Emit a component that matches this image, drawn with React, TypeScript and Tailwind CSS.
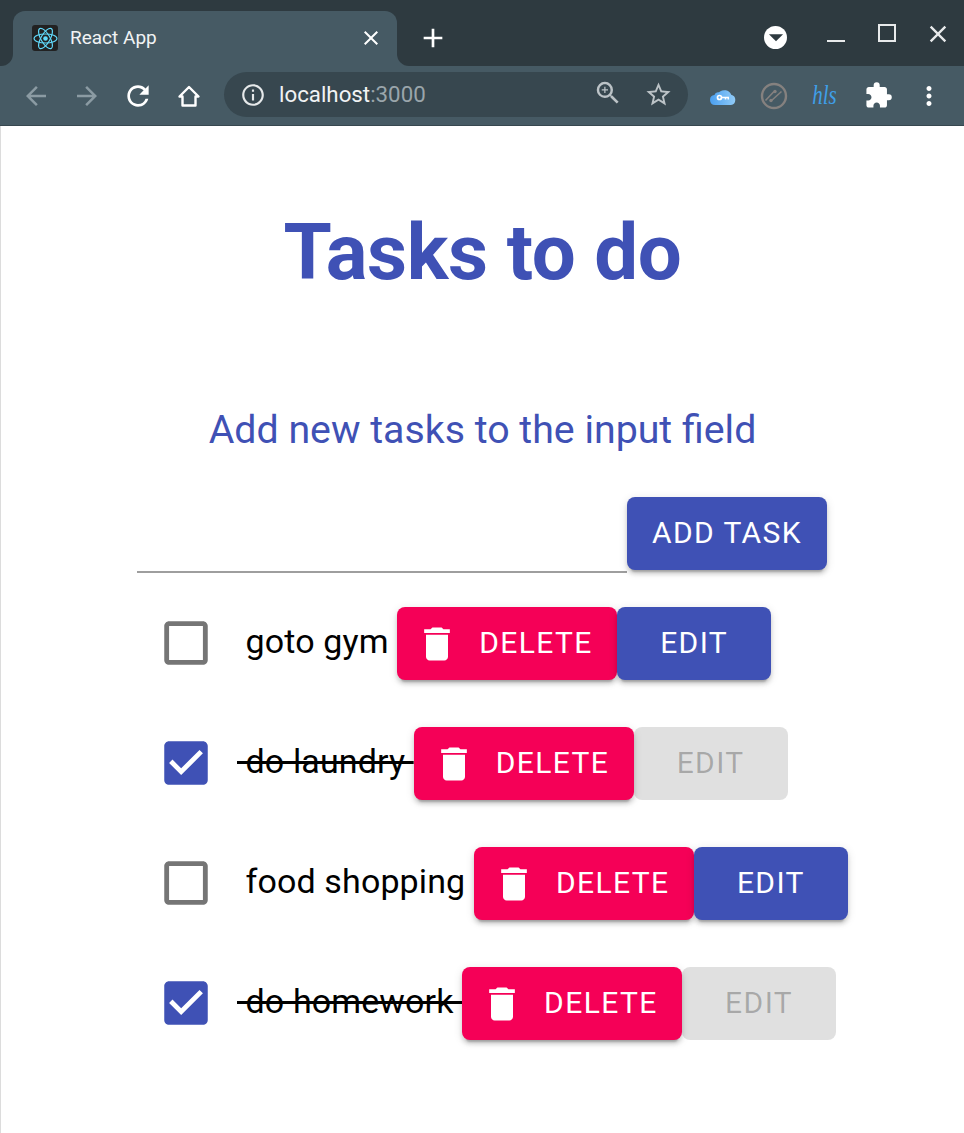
import React from "react";
import { MdArrowBack, MdArrowForward, MdRefresh, MdInfoOutline, MdZoomIn, MdStarBorder, MdExtension, MdMoreVert, MdClose, MdAdd, MdArrowDropDown } from "react-icons/md";

const raised = "shadow-[0_6px_2px_-4px_rgba(0,0,0,0.2),0_4px_4px_rgba(0,0,0,0.14),0_2px_10px_rgba(0,0,0,0.12)]";

const ReactLogo = () => (
  <div className="w-[26px] h-[26px] bg-[#222222] rounded-[3px] flex items-center justify-center shrink-0">
    <svg width="25" height="25" viewBox="-12 -12 24 24" fill="none" stroke="#61dafb" strokeWidth="1.1">
      <circle r="2.2" fill="#61dafb" stroke="none" />
      <ellipse rx="11" ry="4.3" />
      <ellipse rx="11" ry="4.3" transform="rotate(60)" />
      <ellipse rx="11" ry="4.3" transform="rotate(120)" />
    </svg>
  </div>
);

const Cloud = () => (
  <svg width="26" height="20" viewBox="0 0 26 20" className="mb-[2px]">
    <defs>
      <linearGradient id="cl" gradientUnits="userSpaceOnUse" x1="0" y1="0" x2="26" y2="0">
        <stop offset="0" stopColor="#4a9ff0" />
        <stop offset="1" stopColor="#93cdf8" />
      </linearGradient>
    </defs>
    <g fill="url(#cl)">
      <path d="M5 20a5 5 0 0 1-.6-9.960A4 4 0 0 1 9 7.300 7.500 7.500 0 0 1 21.200 9.800 5.200 5.200 0 0 1 21 20z" />
    </g>
    <circle cx="9.500" cy="12.500" r="2" fill="none" stroke="#fff" strokeWidth="1.700" />
    <path d="M11.500 12.500h7.500M15.500 12.500v2M18.300 12.500v2" stroke="#fff" strokeWidth="1.500" fill="none" />
  </svg>
);

const NoLink = () => (
  <svg width="28" height="28" viewBox="0 0 28 28" fill="none" stroke="#85817f" strokeWidth="2.400">
    <circle cx="14" cy="14" r="12" />
    <path d="M5.500 18.500 L14 9.500 M11 19 L21.500 9.500" strokeWidth="1.600" />
    <circle cx="11" cy="18.500" r="1.700" fill="#85817f" stroke="none" />
    <circle cx="15" cy="9.500" r="1.700" fill="#85817f" stroke="none" />
  </svg>
);

const HomeIcon = () => (
  <svg width="24" height="24" viewBox="0 0 24 24" fill="none" stroke="#ffffff" strokeWidth="2.400" strokeLinejoin="round">
    <path d="M12 3 L21.500 12.500 H18.500 V21.500 H5.500 V12.500 H2.500 Z" />
  </svg>
);

const TrashIcon = () => (
  <svg width="44" height="44" viewBox="0 0 24 24" fill="#ffffff" className="shrink-0">
    <path d="M6 19c0 1.100.9 2 2 2h8c1.100 0 2-.9 2-2V7H6v12zM19 4h-3.500l-1-1h-5l-1 1H5v2h14V4z" />
  </svg>
);

const Box = ({ checked }: { checked: boolean }) => (
  <svg width="58" height="58" viewBox="0 0 24 24" fill={checked ? "#3f51b5" : "#757575"} className="shrink-0 -mx-[7px] mb-[2px]">
    {checked ? (
      <path d="M19 3H5c-1.110 0-2 .9-2 2v14c0 1.100.89 2 2 2h14c1.110 0 2-.9 2-2V5c0-1.100-.89-2-2-2zm-9 14l-5-5 1.410-1.410L10 14.170l7.590-7.590L19 8l-9 9z" />
    ) : (
      <path d="M19 5v14H5V5h14m0-2H5c-1.100 0-2 .9-2 2v14c0 1.100.9 2 2 2h14c1.100 0 2-.9 2-2V5c0-1.100-.9-2-2-2z" />
    )}
  </svg>
);

const Row = ({ label, done }: { label: string; done: boolean }) => (
  <div className="flex items-center h-[73px] mb-[47px] pl-[27px]">
    <Box checked={done} />
    <span className={`ml-[29px] mb-[5px] text-[34px] leading-[48px] tracking-[0.120px] text-black whitespace-pre ${done ? "line-through" : ""}`}>
      {` ${label} `}
    </span>
    <button className={`h-[73px] w-[220px] pl-[18px] flex items-center rounded-[8px] bg-[#f50057] text-white text-[30px] tracking-[1.400px] ${raised}`}>
      <TrashIcon />
      <span className="ml-[20px] mb-[2px]">DELETE</span>
    </button>
    {done ? (
      <button disabled className="h-[73px] w-[154px] pb-[2px] rounded-[8px] bg-black/12 text-black/26 text-[30px] tracking-[1.400px]">EDIT</button>
    ) : (
      <button className={`h-[73px] w-[154px] pb-[2px] rounded-[8px] bg-[#3f51b5] text-white text-[30px] tracking-[1.400px] ${raised}`}>EDIT</button>
    )}
  </div>
);

const Slot = ({ children, className = "" }: { children: React.ReactNode; className?: string }) => (
  <div className={`w-[51px] h-[51px] flex items-center justify-center shrink-0 ${className}`}>{children}</div>
);

export default function App() {
  return (
    <div className="w-[964px] h-[1133px] overflow-hidden flex flex-col bg-white font-['Roboto',sans-serif]">
      {/* tab strip */}
      <div className="h-[66px] flex bg-[#465a64] shrink-0">
        <div className="w-[13px] bg-[#2e3a40] rounded-br-[12px]" />
        <div className="w-[384px] bg-[#2e3a40] flex flex-col">
          <div className="h-[11px]" />
          <div className="flex-1 bg-[#465a64] rounded-t-[12px] flex items-center pl-[19px] pr-[14px] pb-[1px]">
            <ReactLogo />
            <span className="ml-[12px] text-[19px] text-[#f1f3f4] flex-1">React App</span>
            <MdClose size={24} color="#ffffff" />
          </div>
        </div>
        <div className="flex-1 bg-[#2e3a40] rounded-bl-[12px] flex items-start pl-[10px] pr-[1px] pt-[8px]">
          <Slot>
            <MdAdd size={32} color="#ffffff" className="mt-[9px]" />
          </Slot>
          <div className="flex-1" />
          <Slot className="mr-[9px]">
            <div className="w-[23px] h-[23px] rounded-full bg-white flex items-center justify-center mt-[7px]">
              <MdArrowDropDown size={34} color="#2e3a40" className="shrink-0" />
            </div>
          </Slot>
          <Slot>
            <div className="w-[18px] h-[2px] bg-[#e8eaeb] mt-[14px]" />
          </Slot>
          <Slot>
            <div className="w-[18px] h-[18px] border-2 border-[#e8eaeb] -mt-[1px]" />
          </Slot>
          <Slot>
            <MdClose size={28} color="#e8eaeb" className="mt-[1px]" />
          </Slot>
        </div>
      </div>

      {/* toolbar */}
      <div className="h-[60px] bg-[#465a64] border-b border-[#37474f] flex items-center pl-[10px] pr-[9px] shrink-0">
        <Slot><MdArrowBack size={30} color="#8b9ba3" /></Slot>
        <Slot><MdArrowForward size={30} color="#8b9ba3" /></Slot>
        <Slot><MdRefresh size={32} color="#ffffff" /></Slot>
        <Slot><HomeIcon /></Slot>
        <div className="ml-[10px] w-[464px] h-[45px] rounded-full bg-[#37474f] flex items-center pl-[16px] pr-[15px] mb-[2px]">
          <MdInfoOutline size={26} color="#e6e9ea" className="shrink-0" />
          <span className="ml-[13px] text-[22.300px] text-[#f1f3f4] flex-1 mt-[1px]">
            localhost<span className="text-[#9aa5ab]">:3000</span>
          </span>
          <MdZoomIn size={30} color="#bcc3c7" className="shrink-0 -mt-[3px]" />
          <MdStarBorder size={29} color="#bcc3c7" className="shrink-0 ml-[21px]" />
        </div>
        <div className="ml-[9px] flex">
          <Slot><Cloud /></Slot>
          <Slot><NoLink /></Slot>
          <Slot>
            <span className="font-['Liberation_Serif',serif] italic text-[21px] text-[#3f9fe8] leading-none scale-y-[1.25]">hls</span>
          </Slot>
          <Slot><MdExtension size={29} color="#ffffff" className="ml-[5px]" /></Slot>
          <Slot><MdMoreVert size={30} color="#ffffff" className="ml-[4px]" /></Slot>
        </div>
      </div>

      {/* page */}
      <div className="flex-1 border-l border-[#dcdcdc] flex flex-col items-center">
        <h1 className="mt-[83px] text-[78px] leading-[88px] font-bold tracking-[-0.400px] text-[#3f51b5]">Tasks to do</h1>
        <p className="mt-[109px] text-[39.300px] leading-[48px] text-[#3f51b5]">Add new tasks to the input field</p>
        <div className="self-start ml-[136px] mt-[43px] w-[730px]">
          <div className="flex items-start mb-[34px]">
            <input aria-label="New task" className="w-[490px] h-[76px] bg-transparent outline-none border-b-2 border-[#9e9e9e]" />
            <button className={`h-[73px] w-[200px] pb-[2px] rounded-[8px] bg-[#3f51b5] text-white text-[30px] tracking-[1.400px] ${raised}`}>
              ADD TASK
            </button>
          </div>
          <Row label="goto gym" done={false} />
          <Row label="do laundry" done={true} />
          <Row label="food shopping" done={false} />
          <Row label="do homework" done={true} />
        </div>
      </div>
    </div>
  );
}
